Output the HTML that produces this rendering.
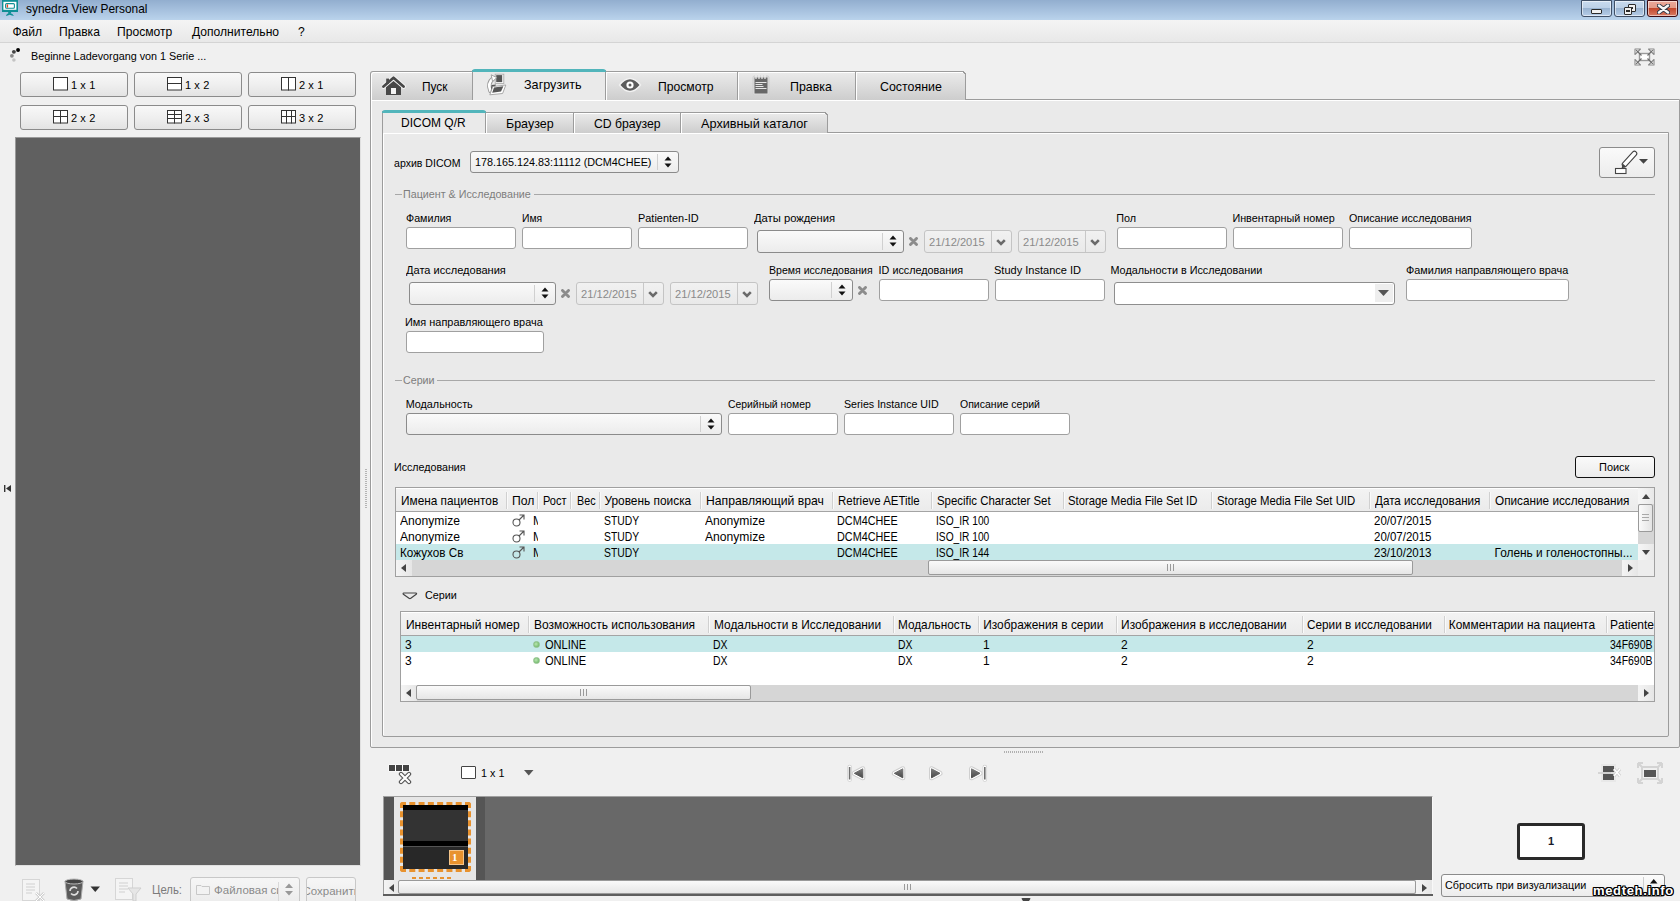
<!DOCTYPE html>
<html><head><meta charset="utf-8"><title>synedra View Personal</title><style>
*{box-sizing:border-box;margin:0;padding:0}
html,body{width:1680px;height:901px;overflow:hidden;background:#f0f0f0;font-family:"Liberation Sans",sans-serif;font-size:11px;color:#000}
.a{position:absolute}
.t{position:absolute;white-space:nowrap;line-height:13px}
.btn{position:absolute;border:1px solid #8b8b8b;border-radius:3px;background:linear-gradient(#f8f8f8 0%,#efefef 50%,#e3e3e3 100%)}
.inp{position:absolute;border:1px solid #a0a0a0;border-radius:3px;background:#fff}
.cmb{position:absolute;border:1px solid #8b8b8b;border-radius:3px;background:linear-gradient(#fafafa,#ececec)}
.dis{position:absolute;border:1px solid #c4c4c4;border-radius:3px;background:#ececec}
</style></head><body>
<div class="a" style="left:0px;top:0px;width:1680px;height:20px;background:linear-gradient(#92aecf,#bad3ec)"></div>
<svg class="a" style="left:0px;top:0px" width="20" height="17" viewBox="0 0 20 17"><rect x="2" y="0" width="16" height="12" fill="#0f8f95"/><rect x="3.4" y="1.8" width="13" height="8" fill="#fff"/><rect x="5.6" y="3.6" width="8.8" height="4.6" rx="1" fill="#fff" stroke="#0f8f95" stroke-width="1.1"/><rect x="6.7" y="4.2" width="1.4" height="3.5" rx="0.7" fill="#e0452a"/><rect x="8.2" y="11.5" width="2.9" height="2" fill="#0f8f95"/><path d="M6 16 Q6.5 13.3 9.7 13 Q12.9 13.3 14 16 Q12 15.8 9.7 14.8 Q7.5 15.8 6 16 Z" fill="#0f8f95"/></svg>
<div class="t" style="left:26px;top:2.78px;font-size:11.9px;color:#000transform:scaleX(0.9548);transform-origin:0 0;">synedra View Personal</div>
<div style="position:absolute;top:0;width:31px;height:17px;border:1px solid #3f4f66;border-radius:0 0 3px 3px;box-shadow:inset 0 0 0 1px rgba(255,255,255,0.55);left:1581px;background:linear-gradient(#c9dbef 0%,#bcd0e7 46%,#98b2d0 47%,#b6cde8 100%)"><div class="a" style="left:9px;top:8px;width:11px;height:5px;background:#f0f0f0;border:1px solid #2b2b2b;border-radius:1px"></div></div>
<div style="position:absolute;top:0;width:31px;height:17px;border:1px solid #3f4f66;border-radius:0 0 3px 3px;box-shadow:inset 0 0 0 1px rgba(255,255,255,0.55);left:1614px;background:linear-gradient(#c9dbef 0%,#bcd0e7 46%,#98b2d0 47%,#b6cde8 100%)"><div class="a" style="left:13px;top:3px;width:8px;height:8px;background:#f0f0f0;border:1px solid #2b2b2b;border-radius:1px"><div class="a" style="left:2px;top:2px;width:2px;height:2px;background:#2b2b2b"></div></div><div class="a" style="left:9px;top:6px;width:8px;height:8px;background:#f0f0f0;border:1px solid #2b2b2b;border-radius:1px"><div class="a" style="left:1px;top:2px;width:4px;height:2px;border:1px solid #2b2b2b"></div></div></div>
<div style="position:absolute;top:0;width:31px;height:17px;border:1px solid #3f4f66;border-radius:0 0 3px 3px;box-shadow:inset 0 0 0 1px rgba(255,255,255,0.55);left:1647px;border-color:#3a0a12;background:linear-gradient(#eca89a 0%,#e39a88 46%,#c3452b 47%,#d87b63 100%)"><svg class="a" style="left:9px;top:3px" width="13" height="10" viewBox="0 0 13 10"><path d="M2 1.5 L11 8.5 M11 1.5 L2 8.5" stroke="#2d3442" stroke-width="4.2" stroke-linecap="round"/><path d="M2 1.5 L11 8.5 M11 1.5 L2 8.5" stroke="#f6f6f6" stroke-width="2.4" stroke-linecap="round"/></svg></div>
<div class="a" style="left:0px;top:20px;width:1680px;height:23px;background:linear-gradient(#f4f4f4,#e8e8e8);border-bottom:1px solid #d4d4d4"></div>
<div class="t" style="left:12.4px;top:26.21px;font-size:12.1px;">Файл</div>
<div class="t" style="left:59px;top:26.21px;font-size:12.1px;">Правка</div>
<div class="t" style="left:117.1px;top:26.21px;font-size:12.1px;">Просмотр</div>
<div class="t" style="left:192px;top:26.21px;font-size:12.1px;">Дополнительно</div>
<div class="t" style="left:298px;top:26.21px;font-size:12.1px;">?</div>
<svg class="a" style="left:9px;top:47px" width="14" height="16" viewBox="0 0 14 16"><circle cx="9.05" cy="3" r="1.95" fill="#000"/><circle cx="4.9" cy="4.85" r="1.95" fill="#444"/><circle cx="2.9" cy="8.85" r="1.9" fill="#8a8a8a"/><circle cx="4.9" cy="13" r="1.8" fill="#c4c4c4"/></svg>
<div class="t" style="left:31px;top:50.16px;font-size:10.8px;">Beginne Ladevorgang von 1 Serie ...</div>
<svg class="a" style="left:1633px;top:47px" width="23" height="20" viewBox="0 0 23 20"><rect x="6.5" y="6.5" width="10" height="7" fill="#fff" stroke="#9a9a9a" stroke-width="1.4"/><path d="M2 2 L7.5 2 L2 7.5 Z" fill="#fff" stroke="#8a8a8a" stroke-width="1.1" stroke-linejoin="round"/><path d="M3.2 3.2 L8.5 8.5" stroke="#6a6a6a" stroke-width="1.2"/><path d="M21 2 L15.5 2 L21 7.5 Z" fill="#fff" stroke="#8a8a8a" stroke-width="1.1" stroke-linejoin="round"/><path d="M19.8 3.2 L14.5 8.5" stroke="#6a6a6a" stroke-width="1.2"/><path d="M2 18 L7.5 18 L2 12.5 Z" fill="#fff" stroke="#8a8a8a" stroke-width="1.1" stroke-linejoin="round"/><path d="M3.2 16.8 L8.5 11.5" stroke="#6a6a6a" stroke-width="1.2"/><path d="M21 18 L15.5 18 L21 12.5 Z" fill="#fff" stroke="#8a8a8a" stroke-width="1.1" stroke-linejoin="round"/><path d="M19.8 16.8 L14.5 11.5" stroke="#6a6a6a" stroke-width="1.2"/></svg>
<div class="btn" style="left:20px;top:72px;width:108px;height:25px;"></div>
<svg class="a" style="left:53px;top:77px" width="15" height="14" viewBox="0 0 15 14"><rect x="0.5" y="0.5" width="14" height="12.5" fill="#fff" stroke="#333"/></svg>
<div class="t" style="left:71px;top:79.09px;font-size:11px;letter-spacing:0.1px">1 x 1</div>
<div class="btn" style="left:134px;top:72px;width:108px;height:25px;"></div>
<svg class="a" style="left:167px;top:77px" width="15" height="14" viewBox="0 0 15 14"><rect x="0.5" y="0.5" width="14" height="12.5" fill="#fff" stroke="#333"/><path d="M0.5 6.5 H14.5" stroke="#333"/></svg>
<div class="t" style="left:185px;top:79.09px;font-size:11px;letter-spacing:0.1px">1 x 2</div>
<div class="btn" style="left:248px;top:72px;width:108px;height:25px;"></div>
<svg class="a" style="left:281px;top:77px" width="15" height="14" viewBox="0 0 15 14"><rect x="0.5" y="0.5" width="14" height="12.5" fill="#fff" stroke="#333"/><path d="M7.5 0.5 V13.5" stroke="#333"/></svg>
<div class="t" style="left:299px;top:79.09px;font-size:11px;letter-spacing:0.1px">2 x 1</div>
<div class="btn" style="left:20px;top:105px;width:108px;height:25px;"></div>
<svg class="a" style="left:53px;top:110px" width="15" height="14" viewBox="0 0 15 14"><rect x="0.5" y="0.5" width="14" height="12.5" fill="#fff" stroke="#333"/><path d="M0.5 6.5 H14.5 M7.5 0.5 V13.5" stroke="#333"/></svg>
<div class="t" style="left:71px;top:112.09px;font-size:11px;letter-spacing:0.1px">2 x 2</div>
<div class="btn" style="left:134px;top:105px;width:108px;height:25px;"></div>
<svg class="a" style="left:167px;top:110px" width="15" height="14" viewBox="0 0 15 14"><rect x="0.5" y="0.5" width="14" height="12.5" fill="#fff" stroke="#333"/><path d="M0.5 4.5 H14.5 M0.5 8.5 H14.5 M7.5 0.5 V13.5" stroke="#333"/></svg>
<div class="t" style="left:185px;top:112.09px;font-size:11px;letter-spacing:0.1px">2 x 3</div>
<div class="btn" style="left:248px;top:105px;width:108px;height:25px;"></div>
<svg class="a" style="left:281px;top:110px" width="15" height="14" viewBox="0 0 15 14"><rect x="0.5" y="0.5" width="14" height="12.5" fill="#fff" stroke="#333"/><path d="M0.5 6.5 H14.5 M5.5 0.5 V13.5 M10.5 0.5 V13.5" stroke="#333"/></svg>
<div class="t" style="left:299px;top:112.09px;font-size:11px;letter-spacing:0.1px">3 x 2</div>
<div class="a" style="left:15px;top:137px;width:346px;height:729px;background:#606060;border:1px solid #9a9a9a;border-bottom-color:#e0e0e0;border-right-color:#e0e0e0"></div>
<svg class="a" style="left:3px;top:484px" width="9" height="9" viewBox="0 0 9 9"><rect x="1" y="1" width="1.4" height="7" fill="#333"/><path d="M8 1 L3 4.5 L8 8 Z" fill="#333"/></svg>
<svg class="a" style="left:22px;top:879px" width="24" height="22" viewBox="0 0 24 22"><rect x="0.5" y="0.5" width="17" height="21" fill="#f4f4f4" stroke="#d6d6d6"/><path d="M4 5h9M4 8h9M4 11h9M4 14h6" stroke="#dcdcdc" stroke-width="1.5"/><path d="M14 14 L22 22 M22 14 L14 22" stroke="#d0d0d0" stroke-width="2.5"/><path d="M14 14 L22 22 M22 14 L14 22" stroke="#fff" stroke-width="1"/></svg>
<svg class="a" style="left:64px;top:878px" width="20" height="23" viewBox="0 0 20 23"><path d="M1 3 L3 21 Q10 24 17 21 L19 3 Z" fill="#5a5a5a" stroke="#aaa"/><ellipse cx="10" cy="3.5" rx="9" ry="2.5" fill="#444" stroke="#bbb"/><path d="M6 13 a4 4 0 0 1 7 -2.5 M14 13 a4 4 0 0 1 -7 2.5" stroke="#ddd" stroke-width="1.6" fill="none"/></svg>
<svg class="a" style="left:90px;top:886px" width="11" height="7" viewBox="0 0 11 7"><path d="M0.5 0.5 H10 L5.25 6 Z" fill="#333"/></svg>
<svg class="a" style="left:115px;top:878px" width="27" height="23" viewBox="0 0 27 23"><rect x="0.5" y="0.5" width="17" height="21" fill="#f4f4f4" stroke="#d6d6d6"/><path d="M4 5h9M4 8h9M4 11h9M4 14h6" stroke="#dcdcdc" stroke-width="1.5"/><path d="M13 10 H26 L21 16 V23 H18 V16 Z" fill="#e6e6e6" stroke="#cfcfcf"/></svg>
<div class="t" style="left:152px;top:883.78px;font-size:11.9px;color:#7b7b7b;transform:scaleX(0.9531);transform-origin:0 0;">Цель:</div>
<div class="dis" style="left:190px;top:877px;width:110px;height:27px;background:linear-gradient(#f6f6f6,#ececec);border-color:#c8c8c8"></div>
<svg class="a" style="left:196px;top:884px" width="14" height="11" viewBox="0 0 14 11"><path d="M0.5 1.5 H5 L6 2.5 H13.5 V10.5 H0.5 Z" fill="#f2f2f2" stroke="#c8c8c8"/></svg>
<div class="a" style="left:213px;top:880px;width:65px;height:18px;overflow:hidden"><div class="t" style="left:1px;top:4.4px;font-size:11.5px;color:#8a8a8a">Файловая система</div></div>
<div class="a" style="left:278px;top:882px;width:1px;height:19px;background:#d8d8d8"></div>
<svg class="a" style="left:285px;top:883px" width="8" height="13" viewBox="0 0 8 13"><path d="M0 5 L4 0.5 L8 5 Z M0 8 L4 12.5 L8 8 Z" fill="#999"/></svg>
<div class="dis" style="left:306px;top:877px;width:50px;height:27px;background:linear-gradient(#f6f6f6,#ececec);border-color:#c8c8c8;overflow:hidden"><div class="t" style="left:-4.5px;top:7px;font-size:11.5px;color:#8a8a8a">Сохранить</div></div>
<div class="a" style="left:370px;top:99px;width:1310px;height:649px;background:#eaeaea;border:1px solid #9c9c9c;box-shadow:inset 1px 1px 0 #fff;border-radius:0 0 2px 2px"></div>
<div class="a" style="left:370px;top:71px;width:103px;height:29px;background:linear-gradient(#ebebeb,#cdcdcd);border:1px solid #9c9c9c;border-bottom:none;box-shadow:inset 1px 1px 0 #fff;border-radius:3px 0 0 0;"></div>
<div class="a" style="left:605px;top:71px;width:133px;height:29px;background:linear-gradient(#ebebeb,#cdcdcd);border:1px solid #9c9c9c;border-bottom:none;box-shadow:inset 1px 1px 0 #fff;"></div>
<div class="a" style="left:737px;top:71px;width:119px;height:29px;background:linear-gradient(#ebebeb,#cdcdcd);border:1px solid #9c9c9c;border-bottom:none;box-shadow:inset 1px 1px 0 #fff;"></div>
<div class="a" style="left:855px;top:71px;width:111px;height:29px;background:linear-gradient(#ebebeb,#cdcdcd);border:1px solid #9c9c9c;border-bottom:none;box-shadow:inset 1px 1px 0 #fff;"></div>
<div class="a" style="left:962px;top:71px;width:4px;height:4px;background:linear-gradient(45deg,transparent 45%,#9c9c9c 45% 65%,#f0f0f0 65%)"></div>
<div class="a" style="left:472px;top:70px;width:134px;height:30px;background:#eaeaea;border:1px solid #9c9c9c;border-top:none;border-bottom:none;"></div>
<div class="a" style="left:472px;top:69px;width:134px;height:3px;background:#52b5bb;border-radius:3px 3px 0 0"></div>
<svg class="a" style="left:382px;top:76px" width="24" height="20" viewBox="0 0 24 20"><g stroke="#fff" stroke-width="1" opacity="0.7"><path d="M1.5 10.5 L11.5 1.8 L21.5 10.5" fill="none" stroke-width="4.6" stroke-linecap="round" stroke-linejoin="round"/></g><path d="M1.5 10.5 L11.5 1.8 L21.5 10.5" fill="none" stroke="#484848" stroke-width="2.8" stroke-linecap="round" stroke-linejoin="round"/><rect x="4.2" y="2.6" width="2.8" height="5" fill="#484848"/><path d="M4 11.3 L11.5 5 L19 11.3 V19 H4 Z" fill="#484848"/><rect x="9" y="12" width="5" height="6" fill="#f4f4f4"/></svg>
<svg class="a" style="left:482px;top:70px" width="28" height="28" viewBox="0 0 28 28"><rect x="13.2" y="4.2" width="8.6" height="9.2" fill="#fff" stroke="#aaa" stroke-width="0.9"/><rect x="14.2" y="5.1" width="6" height="7" fill="#555"/><path d="M8.5 21 Q5 13.5 11.2 8.3" fill="none" stroke="#9a9a9a" stroke-width="4.4" stroke-linecap="round"/><path d="M8.5 21 Q5 13.5 11.2 8.3" fill="none" stroke="#fff" stroke-width="2.6" stroke-linecap="round"/><path d="M9.2 4.8 L14.8 7.6 L10.6 11.6 Z" fill="#fff" stroke="#9a9a9a" stroke-width="0.9" stroke-linejoin="round"/><path d="M9.5 15 L14 14.5 L11 22 L8.6 22.5 Z" fill="#555"/><path d="M10.8 16.6 L23.8 15 L20.6 23.5 L7.8 24.8 Z" fill="#fff" stroke="#a0a0a0" stroke-width="0.9" stroke-linejoin="round"/><path d="M12 17.6 L21.4 16.2 L19 21.6 L10.2 22.7 Z" fill="#555"/></svg>
<svg class="a" style="left:618px;top:76px" width="24" height="18" viewBox="0 0 24 18"><path d="M1.5 9 Q12 -4 22.5 9 Q12 22 1.5 9 Z" fill="#5c5c5c" stroke="#f2f2f2" stroke-width="1.4"/><circle cx="12" cy="9" r="3.6" fill="#fff"/><circle cx="12" cy="9" r="1.5" fill="#5c5c5c"/></svg>
<svg class="a" style="left:752px;top:74px" width="18" height="22" viewBox="0 0 18 22"><rect x="1" y="2" width="16" height="19" rx="1.5" fill="#dedede" stroke="#cfcfcf"/><rect x="2.5" y="3.5" width="13" height="16" fill="#676767"/><path d="M4 1v4M7 1v4M10 1v4M13 1v4" stroke="#f0f0f0" stroke-width="1.2"/><path d="M3.5 8.5h11M3.5 10.5h7M3.5 12.5h8M3.5 14.5h11" stroke="#e6e6e6" stroke-width="1"/></svg>
<div class="t" style="left:422px;top:80.78px;font-size:11.9px;">Пуск</div>
<div class="t" style="left:524px;top:78.6px;font-size:12.4px;transform:scaleX(1.0174);transform-origin:0 0;">Загрузить</div>
<div class="t" style="left:658px;top:80.6px;font-size:12.4px;transform:scaleX(0.9818);transform-origin:0 0;">Просмотр</div>
<div class="t" style="left:790px;top:80.6px;font-size:12.4px;">Правка</div>
<div class="t" style="left:880px;top:80.6px;font-size:12.4px;">Состояние</div>
<div class="a" style="left:382px;top:132px;width:1287px;height:605px;background:#eaeaea;border:1px solid #9c9c9c;box-shadow:inset 1px 1px 0 #fff;border-radius:0 0 2px 2px"></div>
<div class="a" style="left:485px;top:112px;width:89px;height:21px;background:linear-gradient(#ebebeb,#cdcdcd);border:1px solid #9c9c9c;border-bottom:none;box-shadow:inset 1px 1px 0 #fff;"></div>
<div class="a" style="left:573px;top:112px;width:108px;height:21px;background:linear-gradient(#ebebeb,#cdcdcd);border:1px solid #9c9c9c;border-bottom:none;box-shadow:inset 1px 1px 0 #fff;"></div>
<div class="a" style="left:680px;top:112px;width:148px;height:21px;background:linear-gradient(#ebebeb,#cdcdcd);border:1px solid #9c9c9c;border-bottom:none;box-shadow:inset 1px 1px 0 #fff;"></div>
<div class="a" style="left:824px;top:112px;width:4px;height:4px;background:linear-gradient(45deg,transparent 45%,#9c9c9c 45% 65%,#eaeaea 65%)"></div>
<div class="a" style="left:382px;top:111px;width:104px;height:22px;background:#eaeaea;border:1px solid #9c9c9c;border-top:none;border-bottom:none;"></div>
<div class="a" style="left:382px;top:110px;width:104px;height:3px;background:#52b5bb;border-radius:3px 3px 0 0"></div>
<div class="t" style="left:401px;top:116.78px;font-size:11.9px;transform:scaleX(1.0090);transform-origin:0 0;">DICOM Q/R</div>
<div class="t" style="left:506px;top:117.6px;font-size:12.4px;transform:scaleX(1.0057);transform-origin:0 0;">Браузер</div>
<div class="t" style="left:594px;top:117.6px;font-size:12.4px;transform:scaleX(0.9860);transform-origin:0 0;">CD браузер</div>
<div class="t" style="left:701px;top:117.6px;font-size:12.4px;transform:scaleX(1.0247);transform-origin:0 0;">Архивный каталог</div>
<div class="t" style="left:394px;top:157.16px;font-size:10.8px;transform:scaleX(0.9786);transform-origin:0 0;">архив DICOM</div>
<div class="cmb" style="left:470px;top:151px;width:209px;height:22px;"></div>
<div class="a" style="left:657px;top:154px;width:1px;height:16px;background:#d0d0d0"></div>
<svg class="a" style="left:664px;top:156px" width="8" height="12" viewBox="0 0 8 12"><path d="M0.5 4.5 L4 0.5 L7.5 4.5 Z M0.5 7.5 L4 11.5 L7.5 7.5 Z" fill="#111"/></svg>
<div class="t" style="left:475px;top:156.16px;font-size:10.8px;">178.165.124.83:11112 (DCM4CHEE)</div>
<div class="btn" style="left:1599px;top:147px;width:56px;height:31px;background:linear-gradient(#fafafa,#ececec)"></div>
<svg class="a" style="left:1599px;top:147px" width="56" height="31" viewBox="0 0 56 31"><rect x="16.5" y="21.5" width="10.5" height="5" fill="#fff" stroke="#444" stroke-width="1.1"/><path d="M25.5 17.5 L35.5 6.5" stroke="#444" stroke-width="5.6" stroke-linecap="round"/><path d="M25.5 17.5 L35.5 6.5" stroke="#fff" stroke-width="3.4" stroke-linecap="round"/><path d="M22.6 21.4 L23.6 16.6 L27.4 19.8 Z" fill="#444"/><path d="M40 12 H49 L44.5 16.8 Z" fill="#444"/></svg>
<div class="a" style="left:395px;top:194px;width:1260px;height:1px;background:#a8a8a8"></div>
<div class="a" style="left:402px;top:186px;width:132px;height:14px;background:#eaeaea"></div>
<div class="t" style="left:403px;top:188.16px;font-size:10.8px;color:#7d7d7d;transform:scaleX(0.9932);transform-origin:0 0;">Пациент &amp; Исследование</div>
<div class="t" style="left:405.5px;top:212.16px;font-size:10.8px;transform:scaleX(0.9900);transform-origin:0 0;">Фамилия</div>
<div class="t" style="left:521.6px;top:212.16px;font-size:10.8px;transform:scaleX(0.9603);transform-origin:0 0;">Имя</div>
<div class="t" style="left:637.5px;top:212.16px;font-size:10.8px;transform:scaleX(1.0111);transform-origin:0 0;">Patienten-ID</div>
<div class="t" style="left:754px;top:212.16px;font-size:10.8px;transform:scaleX(1.0402);transform-origin:0 0;">Даты рождения</div>
<div class="t" style="left:1116.3px;top:212.16px;font-size:10.8px;">Пол</div>
<div class="t" style="left:1232.4px;top:212.16px;font-size:10.8px;">Инвентарный номер</div>
<div class="t" style="left:1349px;top:212.16px;font-size:10.8px;transform:scaleX(0.9946);transform-origin:0 0;">Описание исследования</div>
<div class="inp" style="left:406px;top:227px;width:110px;height:22px;"></div>
<div class="inp" style="left:522px;top:227px;width:110px;height:22px;"></div>
<div class="inp" style="left:638px;top:227px;width:110px;height:22px;"></div>
<div class="cmb" style="left:757px;top:230px;width:147px;height:23px;"></div>
<div class="a" style="left:882px;top:233px;width:1px;height:17px;background:#d0d0d0"></div>
<svg class="a" style="left:889px;top:235px" width="8" height="12" viewBox="0 0 8 12"><path d="M0.5 4.5 L4 0.5 L7.5 4.5 Z M0.5 7.5 L4 11.5 L7.5 7.5 Z" fill="#111"/></svg>
<svg class="a" style="left:909px;top:237px" width="9" height="9" viewBox="0 0 9 9"><path d="M1.5 1.5 L7.5 7.5 M7.5 1.5 L1.5 7.5" stroke="#8c8c8c" stroke-width="2.9" stroke-linecap="round"/></svg>
<div class="dis" style="left:924px;top:230px;width:88px;height:23px;background:linear-gradient(#f1f1f1,#e9e9e9)"></div>
<div class="a" style="left:991px;top:231px;width:1px;height:21px;background:#c8c8c8"></div>
<div class="t" style="left:929px;top:236.16px;font-size:10.8px;color:#8a8a8a;transform:scaleX(1.0305);transform-origin:0 0;">21/12/2015</div>
<svg class="a" style="left:996px;top:239px" width="10" height="7" viewBox="0 0 10 7"><path d="M1.2 1.2 L5 5 L8.8 1.2" stroke="#6a6a6a" stroke-width="2.6" fill="none"/></svg>
<div class="dis" style="left:1018px;top:230px;width:88px;height:23px;background:linear-gradient(#f1f1f1,#e9e9e9)"></div>
<div class="a" style="left:1085px;top:231px;width:1px;height:21px;background:#c8c8c8"></div>
<div class="t" style="left:1023px;top:236.16px;font-size:10.8px;color:#8a8a8a;transform:scaleX(1.0305);transform-origin:0 0;">21/12/2015</div>
<svg class="a" style="left:1090px;top:239px" width="10" height="7" viewBox="0 0 10 7"><path d="M1.2 1.2 L5 5 L8.8 1.2" stroke="#6a6a6a" stroke-width="2.6" fill="none"/></svg>
<div class="inp" style="left:1117px;top:227px;width:110px;height:22px;"></div>
<div class="inp" style="left:1233px;top:227px;width:110px;height:22px;"></div>
<div class="inp" style="left:1349px;top:227px;width:123px;height:22px;"></div>
<div class="t" style="left:405.5px;top:264.16px;font-size:10.8px;transform:scaleX(1.0226);transform-origin:0 0;">Дата исследования</div>
<div class="t" style="left:768.5px;top:264.16px;font-size:10.8px;transform:scaleX(0.9767);transform-origin:0 0;">Время исследования</div>
<div class="t" style="left:878.6px;top:264.16px;font-size:10.8px;">ID исследования</div>
<div class="t" style="left:994.4px;top:264.16px;font-size:10.8px;transform:scaleX(1.0206);transform-origin:0 0;">Study Instance ID</div>
<div class="t" style="left:1110.5px;top:264.16px;font-size:10.8px;">Модальности в Исследовании</div>
<div class="t" style="left:1406px;top:264.16px;font-size:10.8px;transform:scaleX(1.0083);transform-origin:0 0;">Фамилия направляющего врача</div>
<div class="cmb" style="left:409px;top:282px;width:147px;height:23px;"></div>
<div class="a" style="left:534px;top:285px;width:1px;height:17px;background:#d0d0d0"></div>
<svg class="a" style="left:541px;top:287px" width="8" height="12" viewBox="0 0 8 12"><path d="M0.5 4.5 L4 0.5 L7.5 4.5 Z M0.5 7.5 L4 11.5 L7.5 7.5 Z" fill="#111"/></svg>
<svg class="a" style="left:561px;top:289px" width="9" height="9" viewBox="0 0 9 9"><path d="M1.5 1.5 L7.5 7.5 M7.5 1.5 L1.5 7.5" stroke="#8c8c8c" stroke-width="2.9" stroke-linecap="round"/></svg>
<div class="dis" style="left:576px;top:282px;width:88px;height:23px;background:linear-gradient(#f1f1f1,#e9e9e9)"></div>
<div class="a" style="left:643px;top:283px;width:1px;height:21px;background:#c8c8c8"></div>
<div class="t" style="left:581px;top:288.16px;font-size:10.8px;color:#8a8a8a;transform:scaleX(1.0305);transform-origin:0 0;">21/12/2015</div>
<svg class="a" style="left:648px;top:291px" width="10" height="7" viewBox="0 0 10 7"><path d="M1.2 1.2 L5 5 L8.8 1.2" stroke="#6a6a6a" stroke-width="2.6" fill="none"/></svg>
<div class="dis" style="left:670px;top:282px;width:88px;height:23px;background:linear-gradient(#f1f1f1,#e9e9e9)"></div>
<div class="a" style="left:737px;top:283px;width:1px;height:21px;background:#c8c8c8"></div>
<div class="t" style="left:675px;top:288.16px;font-size:10.8px;color:#8a8a8a;transform:scaleX(1.0305);transform-origin:0 0;">21/12/2015</div>
<svg class="a" style="left:742px;top:291px" width="10" height="7" viewBox="0 0 10 7"><path d="M1.2 1.2 L5 5 L8.8 1.2" stroke="#6a6a6a" stroke-width="2.6" fill="none"/></svg>
<div class="cmb" style="left:769px;top:279px;width:84px;height:22px;"></div>
<div class="a" style="left:831px;top:282px;width:1px;height:16px;background:#d0d0d0"></div>
<svg class="a" style="left:838px;top:284px" width="8" height="12" viewBox="0 0 8 12"><path d="M0.5 4.5 L4 0.5 L7.5 4.5 Z M0.5 7.5 L4 11.5 L7.5 7.5 Z" fill="#111"/></svg>
<svg class="a" style="left:858px;top:286px" width="9" height="9" viewBox="0 0 9 9"><path d="M1.5 1.5 L7.5 7.5 M7.5 1.5 L1.5 7.5" stroke="#8c8c8c" stroke-width="2.9" stroke-linecap="round"/></svg>
<div class="inp" style="left:879px;top:279px;width:110px;height:22px;"></div>
<div class="inp" style="left:995px;top:279px;width:110px;height:22px;"></div>
<div class="inp" style="left:1114px;top:282px;width:281px;height:23px;border-color:#8e8e8e"></div>
<div class="a" style="left:1375px;top:284px;width:18px;height:18px;background:#eeeeee"></div>
<svg class="a" style="left:1377px;top:289px" width="13" height="8" viewBox="0 0 13 8"><path d="M1 1 H12 L6.5 7 Z" fill="#555"/></svg>
<div class="inp" style="left:1406px;top:279px;width:163px;height:22px;"></div>
<div class="t" style="left:405px;top:316.16px;font-size:10.8px;transform:scaleX(1.0115);transform-origin:0 0;">Имя направляющего врача</div>
<div class="inp" style="left:406px;top:331px;width:138px;height:22px;"></div>
<div class="a" style="left:395px;top:380px;width:1260px;height:1px;background:#a8a8a8"></div>
<div class="a" style="left:402px;top:372px;width:35px;height:14px;background:#eaeaea"></div>
<div class="t" style="left:403px;top:374.19px;font-size:10.7px;color:#7d7d7d;">Серии</div>
<div class="t" style="left:405.7px;top:398.16px;font-size:10.8px;">Модальность</div>
<div class="t" style="left:728px;top:398.16px;font-size:10.8px;transform:scaleX(0.9623);transform-origin:0 0;">Серийный номер</div>
<div class="t" style="left:843.8px;top:398.16px;font-size:10.8px;transform:scaleX(0.9860);transform-origin:0 0;">Series Instance UID</div>
<div class="t" style="left:960px;top:398.16px;font-size:10.8px;transform:scaleX(0.9736);transform-origin:0 0;">Описание серий</div>
<div class="cmb" style="left:406px;top:413px;width:316px;height:22px;"></div>
<div class="a" style="left:700px;top:416px;width:1px;height:16px;background:#d0d0d0"></div>
<svg class="a" style="left:707px;top:418px" width="8" height="12" viewBox="0 0 8 12"><path d="M0.5 4.5 L4 0.5 L7.5 4.5 Z M0.5 7.5 L4 11.5 L7.5 7.5 Z" fill="#111"/></svg>
<div class="inp" style="left:728px;top:413px;width:110px;height:22px;"></div>
<div class="inp" style="left:844px;top:413px;width:110px;height:22px;"></div>
<div class="inp" style="left:960px;top:413px;width:110px;height:22px;"></div>
<div class="t" style="left:394px;top:461.16px;font-size:10.8px;transform:scaleX(0.9888);transform-origin:0 0;">Исследования</div>
<div class="btn" style="left:1575px;top:456px;width:80px;height:22px;background:linear-gradient(#fafafa,#ececec);border-color:#111"></div>
<div class="t" style="left:1599px;top:461.16px;font-size:10.8px;transform:scaleX(1.0158);transform-origin:0 0;">Поиск</div>
<div class="a" style="left:395px;top:487px;width:1260px;height:90px;background:#fff;border:1px solid #a0a0a0;box-shadow:inset 1px 1px 0 #fff"></div>
<div class="a" style="left:396px;top:488px;width:1242px;height:24px;background:linear-gradient(#f3f3f3,#ebebeb);border-bottom:1px solid #a4a4a4;box-shadow:inset 0 1px 0 #fff"></div>
<div class="a" style="left:506px;top:492px;width:1px;height:17px;background:#d0d0d0;box-shadow:1px 0 0 #fafafa"></div>
<div class="a" style="left:537px;top:492px;width:1px;height:17px;background:#d0d0d0;box-shadow:1px 0 0 #fafafa"></div>
<div class="a" style="left:570px;top:492px;width:1px;height:17px;background:#d0d0d0;box-shadow:1px 0 0 #fafafa"></div>
<div class="a" style="left:599px;top:492px;width:1px;height:17px;background:#d0d0d0;box-shadow:1px 0 0 #fafafa"></div>
<div class="a" style="left:700px;top:492px;width:1px;height:17px;background:#d0d0d0;box-shadow:1px 0 0 #fafafa"></div>
<div class="a" style="left:832px;top:492px;width:1px;height:17px;background:#d0d0d0;box-shadow:1px 0 0 #fafafa"></div>
<div class="a" style="left:931px;top:492px;width:1px;height:17px;background:#d0d0d0;box-shadow:1px 0 0 #fafafa"></div>
<div class="a" style="left:1063px;top:492px;width:1px;height:17px;background:#d0d0d0;box-shadow:1px 0 0 #fafafa"></div>
<div class="a" style="left:1211px;top:492px;width:1px;height:17px;background:#d0d0d0;box-shadow:1px 0 0 #fafafa"></div>
<div class="a" style="left:1369px;top:492px;width:1px;height:17px;background:#d0d0d0;box-shadow:1px 0 0 #fafafa"></div>
<div class="a" style="left:1489px;top:492px;width:1px;height:17px;background:#d0d0d0;box-shadow:1px 0 0 #fafafa"></div>
<div class="t" style="left:401.1px;top:494.78px;font-size:11.9px;transform:scaleX(0.9947);transform-origin:0 0;">Имена пациентов</div>
<div class="t" style="left:512.3px;top:494.78px;font-size:11.9px;transform:scaleX(1.0250);transform-origin:0 0;">Пол</div>
<div class="t" style="left:543.3px;top:494.78px;font-size:11.9px;transform:scaleX(0.9279);transform-origin:0 0;">Рост</div>
<div class="t" style="left:576.5px;top:494.78px;font-size:11.9px;transform:scaleX(0.9071);transform-origin:0 0;">Вес</div>
<div class="t" style="left:604.4px;top:494.78px;font-size:11.9px;">Уровень поиска</div>
<div class="t" style="left:706.1px;top:494.78px;font-size:11.9px;transform:scaleX(1.0248);transform-origin:0 0;">Направляющий врач</div>
<div class="t" style="left:838.3px;top:494.78px;font-size:11.9px;transform:scaleX(0.9626);transform-origin:0 0;">Retrieve AETitle</div>
<div class="t" style="left:937.2px;top:494.78px;font-size:11.9px;transform:scaleX(0.9604);transform-origin:0 0;">Specific Character Set</div>
<div class="t" style="left:1067.8px;top:494.78px;font-size:11.9px;transform:scaleX(0.9504);transform-origin:0 0;">Storage Media File Set ID</div>
<div class="t" style="left:1217.1px;top:494.78px;font-size:11.9px;transform:scaleX(0.9548);transform-origin:0 0;">Storage Media File Set UID</div>
<div class="t" style="left:1374.5px;top:494.78px;font-size:11.9px;transform:scaleX(0.9811);transform-origin:0 0;">Дата исследования</div>
<div class="t" style="left:1495.2px;top:494.78px;font-size:11.9px;transform:scaleX(0.9894);transform-origin:0 0;">Описание исследования</div>
<div class="a" style="left:396px;top:544px;width:1242px;height:16px;background:#c5e8e9"></div>
<div class="t" style="left:400px;top:514.78px;font-size:11.9px;transform:scaleX(1.0192);transform-origin:0 0;">Anonymize</div>
<svg class="a" style="left:512px;top:514px" width="13" height="13" viewBox="0 0 13 13"><circle cx="4.5" cy="8.5" r="3.5" fill="none" stroke="#555" stroke-width="1.1"/><path d="M7 6 L11.5 1.5 M7.5 1 H12 V5.5" fill="none" stroke="#555" stroke-width="1.1"/></svg>
<div class="a" style="left:533px;top:515px;width:5px;height:14px;overflow:hidden"><div class="t" style="left:0;top:0;font-size:12px">M</div></div>
<div class="t" style="left:604.4px;top:514.78px;font-size:11.9px;transform:scaleX(0.8703);transform-origin:0 0;">STUDY</div>
<div class="t" style="left:705.3px;top:514.78px;font-size:11.9px;transform:scaleX(1.0192);transform-origin:0 0;">Anonymize</div>
<div class="t" style="left:837px;top:514.78px;font-size:11.9px;transform:scaleX(0.9104);transform-origin:0 0;">DCM4CHEE</div>
<div class="t" style="left:936px;top:514.78px;font-size:11.9px;transform:scaleX(0.8572);transform-origin:0 0;">ISO_IR 100</div>
<div class="t" style="left:1374.1px;top:514.78px;font-size:11.9px;transform:scaleX(0.9654);transform-origin:0 0;">20/07/2015</div>
<div class="t" style="left:400px;top:530.78px;font-size:11.9px;transform:scaleX(1.0192);transform-origin:0 0;">Anonymize</div>
<svg class="a" style="left:512px;top:530px" width="13" height="13" viewBox="0 0 13 13"><circle cx="4.5" cy="8.5" r="3.5" fill="none" stroke="#555" stroke-width="1.1"/><path d="M7 6 L11.5 1.5 M7.5 1 H12 V5.5" fill="none" stroke="#555" stroke-width="1.1"/></svg>
<div class="a" style="left:533px;top:531px;width:5px;height:14px;overflow:hidden"><div class="t" style="left:0;top:0;font-size:12px">M</div></div>
<div class="t" style="left:604.4px;top:530.78px;font-size:11.9px;transform:scaleX(0.8703);transform-origin:0 0;">STUDY</div>
<div class="t" style="left:705.3px;top:530.78px;font-size:11.9px;transform:scaleX(1.0192);transform-origin:0 0;">Anonymize</div>
<div class="t" style="left:837px;top:530.78px;font-size:11.9px;transform:scaleX(0.9104);transform-origin:0 0;">DCM4CHEE</div>
<div class="t" style="left:936px;top:530.78px;font-size:11.9px;transform:scaleX(0.8572);transform-origin:0 0;">ISO_IR 100</div>
<div class="t" style="left:1374.1px;top:530.78px;font-size:11.9px;transform:scaleX(0.9654);transform-origin:0 0;">20/07/2015</div>
<div class="t" style="left:400px;top:546.78px;font-size:11.9px;transform:scaleX(0.9854);transform-origin:0 0;">Кожухов Св</div>
<svg class="a" style="left:512px;top:546px" width="13" height="13" viewBox="0 0 13 13"><circle cx="4.5" cy="8.5" r="3.5" fill="none" stroke="#555" stroke-width="1.1"/><path d="M7 6 L11.5 1.5 M7.5 1 H12 V5.5" fill="none" stroke="#555" stroke-width="1.1"/></svg>
<div class="a" style="left:533px;top:547px;width:5px;height:14px;overflow:hidden"><div class="t" style="left:0;top:0;font-size:12px">M</div></div>
<div class="t" style="left:604.4px;top:546.78px;font-size:11.9px;transform:scaleX(0.8703);transform-origin:0 0;">STUDY</div>
<div class="t" style="left:837px;top:546.78px;font-size:11.9px;transform:scaleX(0.9104);transform-origin:0 0;">DCM4CHEE</div>
<div class="t" style="left:936px;top:546.78px;font-size:11.9px;transform:scaleX(0.8572);transform-origin:0 0;">ISO_IR 144</div>
<div class="t" style="left:1374.1px;top:546.78px;font-size:11.9px;transform:scaleX(0.9654);transform-origin:0 0;">23/10/2013</div>
<div class="t" style="left:1494.5px;top:546.78px;font-size:11.9px;">Голень и голеностопны...</div>
<div class="a" style="left:1638px;top:488px;width:16px;height:72px;background:#d6d6d6"></div>
<div class="a" style="left:1638px;top:488px;width:16px;height:16px;background:linear-gradient(90deg,#f6f6f6,#e8e8e8)"></div>
<div class="a" style="left:1638px;top:544px;width:16px;height:16px;background:linear-gradient(90deg,#f6f6f6,#e8e8e8)"></div>
<svg class="a" style="left:1642px;top:494px" width="8" height="5" viewBox="0 0 8 5"><path d="M0 5 H8 L4 0 Z" fill="#444"/></svg>
<svg class="a" style="left:1642px;top:550px" width="8" height="5" viewBox="0 0 8 5"><path d="M0 0 H8 L4 5 Z" fill="#444"/></svg>
<div class="a" style="left:1638px;top:504px;width:15px;height:28px;background:linear-gradient(90deg,#fafafa,#e4e4e4);border:1px solid #9a9a9a;border-radius:2px"></div>
<div class="a" style="left:1642px;top:514px;width:7px;height:8px;background:repeating-linear-gradient(#a8a8a8 0 1px,transparent 1px 3px)"></div>
<div class="a" style="left:396px;top:560px;width:1242px;height:16px;background:#d6d6d6"></div>
<div class="a" style="left:396px;top:560px;width:16px;height:16px;background:linear-gradient(90deg,#f4f4f4,#e6e6e6)"></div>
<div class="a" style="left:1622px;top:560px;width:16px;height:16px;background:linear-gradient(90deg,#f4f4f4,#e6e6e6)"></div>
<svg class="a" style="left:401px;top:564px" width="5" height="8" viewBox="0 0 5 8"><path d="M5 0 V8 L0 4 Z" fill="#444"/></svg>
<svg class="a" style="left:1628px;top:564px" width="5" height="8" viewBox="0 0 5 8"><path d="M0 0 V8 L5 4 Z" fill="#444"/></svg>
<div class="a" style="left:928px;top:560px;width:485px;height:15px;background:linear-gradient(#fafafa,#e6e6e6);border:1px solid #9a9a9a;border-radius:2px"></div>
<div class="a" style="left:1167px;top:564px;width:7px;height:7px;background:repeating-linear-gradient(90deg,#9a9a9a 0 1px,transparent 1px 3px)"></div>
<div class="a" style="left:1638px;top:560px;width:16px;height:16px;background:#ededed"></div>
<svg class="a" style="left:402px;top:592px" width="16" height="8" viewBox="0 0 16 8"><path d="M1.8 1 H13.8 Q15.2 1.2 14.2 2.3 L8.8 6.3 Q7.9 7 7 6.3 L1.4 2.3 Q0.6 1.2 1.8 1 Z" fill="none" stroke="#444" stroke-width="1.15"/></svg>
<div class="t" style="left:425px;top:589.16px;font-size:10.8px;">Серии</div>
<div class="a" style="left:400px;top:611px;width:1255px;height:91px;background:#fff;border:1px solid #a0a0a0;box-shadow:inset 1px 1px 0 #fff"></div>
<div class="a" style="left:401px;top:612px;width:1253px;height:24px;background:linear-gradient(#f3f3f3,#ebebeb);border-bottom:1px solid #a4a4a4;box-shadow:inset 0 1px 0 #fff"></div>
<div class="a" style="left:528px;top:616px;width:1px;height:17px;background:#d0d0d0;box-shadow:1px 0 0 #fafafa"></div>
<div class="a" style="left:708px;top:616px;width:1px;height:17px;background:#d0d0d0;box-shadow:1px 0 0 #fafafa"></div>
<div class="a" style="left:893px;top:616px;width:1px;height:17px;background:#d0d0d0;box-shadow:1px 0 0 #fafafa"></div>
<div class="a" style="left:978px;top:616px;width:1px;height:17px;background:#d0d0d0;box-shadow:1px 0 0 #fafafa"></div>
<div class="a" style="left:1116px;top:616px;width:1px;height:17px;background:#d0d0d0;box-shadow:1px 0 0 #fafafa"></div>
<div class="a" style="left:1302px;top:616px;width:1px;height:17px;background:#d0d0d0;box-shadow:1px 0 0 #fafafa"></div>
<div class="a" style="left:1444px;top:616px;width:1px;height:17px;background:#d0d0d0;box-shadow:1px 0 0 #fafafa"></div>
<div class="a" style="left:1606px;top:616px;width:1px;height:17px;background:#d0d0d0;box-shadow:1px 0 0 #fafafa"></div>
<div class="t" style="left:406.25px;top:618.78px;font-size:11.9px;transform:scaleX(1.0089);transform-origin:0 0;">Инвентарный номер</div>
<div class="t" style="left:533.75px;top:618.78px;font-size:11.9px;transform:scaleX(1.0106);transform-origin:0 0;">Возможность использования</div>
<div class="t" style="left:714px;top:618.78px;font-size:11.9px;">Модальности в Исследовании</div>
<div class="t" style="left:898px;top:618.78px;font-size:11.9px;transform:scaleX(0.9912);transform-origin:0 0;">Модальность</div>
<div class="t" style="left:983.25px;top:618.78px;font-size:11.9px;">Изображения в серии</div>
<div class="t" style="left:1121.1px;top:618.78px;font-size:11.9px;">Изображения в исследовании</div>
<div class="t" style="left:1307px;top:618.78px;font-size:11.9px;transform:scaleX(0.9910);transform-origin:0 0;">Серии в исследовании</div>
<div class="t" style="left:1448.75px;top:618.78px;font-size:11.9px;">Комментарии на пациента</div>
<div class="a" style="left:1607px;top:612px;width:47px;height:23px;overflow:hidden"><div class="t" style="left:3px;top:7px;font-size:12px">Patienten-ID</div></div>
<div class="a" style="left:401px;top:636px;width:1253px;height:16px;background:#c5e8e9"></div>
<div class="t" style="left:405px;top:638.74px;font-size:12px;">3</div>
<div class="a" style="left:533px;top:641px;width:7px;height:7px;border-radius:50%;background:radial-gradient(circle at 40% 40%,#b9e6b0,#5fae5a);border:1px solid #8fbf8a"></div>
<div class="t" style="left:545px;top:638.78px;font-size:11.9px;transform:scaleX(0.9310);transform-origin:0 0;">ONLINE</div>
<div class="t" style="left:713px;top:638.78px;font-size:11.9px;transform:scaleX(0.8771);transform-origin:0 0;">DX</div>
<div class="t" style="left:898px;top:638.78px;font-size:11.9px;transform:scaleX(0.8771);transform-origin:0 0;">DX</div>
<div class="t" style="left:983px;top:638.74px;font-size:12px;">1</div>
<div class="t" style="left:1121px;top:638.74px;font-size:12px;">2</div>
<div class="t" style="left:1307px;top:638.74px;font-size:12px;">2</div>
<div class="a" style="left:1607px;top:639px;width:46px;height:14px;overflow:hidden"><div class="t" style="left:2.5px;top:0;font-size:11.9px;transform:scaleX(0.8800);transform-origin:0 0">34F690B</div></div>
<div class="t" style="left:405px;top:654.74px;font-size:12px;">3</div>
<div class="a" style="left:533px;top:657px;width:7px;height:7px;border-radius:50%;background:radial-gradient(circle at 40% 40%,#b9e6b0,#5fae5a);border:1px solid #8fbf8a"></div>
<div class="t" style="left:545px;top:654.78px;font-size:11.9px;transform:scaleX(0.9310);transform-origin:0 0;">ONLINE</div>
<div class="t" style="left:713px;top:654.78px;font-size:11.9px;transform:scaleX(0.8771);transform-origin:0 0;">DX</div>
<div class="t" style="left:898px;top:654.78px;font-size:11.9px;transform:scaleX(0.8771);transform-origin:0 0;">DX</div>
<div class="t" style="left:983px;top:654.74px;font-size:12px;">1</div>
<div class="t" style="left:1121px;top:654.74px;font-size:12px;">2</div>
<div class="t" style="left:1307px;top:654.74px;font-size:12px;">2</div>
<div class="a" style="left:1607px;top:655px;width:46px;height:14px;overflow:hidden"><div class="t" style="left:2.5px;top:0;font-size:11.9px;transform:scaleX(0.8800);transform-origin:0 0">34F690B</div></div>
<div class="a" style="left:401px;top:685px;width:1253px;height:16px;background:#d6d6d6"></div>
<div class="a" style="left:401px;top:685px;width:16px;height:16px;background:linear-gradient(90deg,#f4f4f4,#e6e6e6)"></div>
<div class="a" style="left:1638px;top:685px;width:16px;height:16px;background:linear-gradient(90deg,#f4f4f4,#e6e6e6)"></div>
<svg class="a" style="left:406px;top:689px" width="5" height="8" viewBox="0 0 5 8"><path d="M5 0 V8 L0 4 Z" fill="#444"/></svg>
<svg class="a" style="left:1644px;top:689px" width="5" height="8" viewBox="0 0 5 8"><path d="M0 0 V8 L5 4 Z" fill="#444"/></svg>
<div class="a" style="left:416px;top:685px;width:335px;height:15px;background:linear-gradient(#fafafa,#e6e6e6);border:1px solid #9a9a9a;border-radius:2px"></div>
<div class="a" style="left:580px;top:689px;width:7px;height:7px;background:repeating-linear-gradient(90deg,#9a9a9a 0 1px,transparent 1px 3px)"></div>
<div class="a" style="left:1004px;top:751px;width:40px;height:2px;background:repeating-linear-gradient(90deg,#b0b0b0 0 1px,transparent 1px 2px)"></div>
<div class="a" style="left:365px;top:469px;width:2px;height:40px;background:repeating-linear-gradient(#b4b4b4 0 1px,transparent 1px 2px)"></div>
<svg class="a" style="left:387px;top:763px" width="26" height="22" viewBox="0 0 26 22"><rect x="1.5" y="1.5" width="21" height="7" fill="#fff"/><rect x="2" y="2" width="6" height="6" fill="#444"/><rect x="9" y="2" width="6" height="6" fill="#444"/><rect x="16" y="2" width="6" height="6" fill="#444"/><path d="M14 11 L22 19 M22 11 L14 19" stroke="#555" stroke-width="4.4" stroke-linecap="round"/><path d="M14 11 L22 19 M22 11 L14 19" stroke="#fff" stroke-width="2.2" stroke-linecap="round"/></svg>
<div class="a" style="left:461px;top:766px;width:15px;height:13px;background:#fff;border:1px solid #444;border-radius:1px"></div>
<div class="t" style="left:481px;top:767.16px;font-size:10.8px;">1 x 1</div>
<svg class="a" style="left:524px;top:770px" width="10" height="6" viewBox="0 0 10 6"><path d="M0 0 H9.5 L4.75 5.5 Z" fill="#555"/></svg>
<svg class="a" style="left:840px;top:755px" width="160" height="35" viewBox="0 0 160 35"><defs><linearGradient id="ng" x1="0" y1="0" x2="0" y2="1"><stop offset="0" stop-color="#7a7a7a"/><stop offset="1" stop-color="#4a4a4a"/></linearGradient></defs><path d="M9.6 12 V24.5" stroke="#d0d0d0" stroke-width="4.5" stroke-linecap="round"/><path d="M9.6 12 V24.5" stroke="#fff" stroke-width="3" stroke-linecap="round"/><path d="M9.6 12 V24.5" stroke="#707070" stroke-width="1.6"/><path d="M22.8 13.8 L22.8 22.8 L14.3 18.3 Z" fill="none" stroke="#cfcfcf" stroke-width="5" stroke-linejoin="round"/><path d="M22.8 13.8 L22.8 22.8 L14.3 18.3 Z" fill="none" stroke="#fff" stroke-width="3" stroke-linejoin="round"/><path d="M22.8 13.8 L22.8 22.8 L14.3 18.3 Z" fill="url(#ng)" stroke="url(#ng)" stroke-width="1" stroke-linejoin="round"/><path d="M62.8 13.8 L62.8 22.8 L54.3 18.3 Z" fill="none" stroke="#cfcfcf" stroke-width="5" stroke-linejoin="round"/><path d="M62.8 13.8 L62.8 22.8 L54.3 18.3 Z" fill="none" stroke="#fff" stroke-width="3" stroke-linejoin="round"/><path d="M62.8 13.8 L62.8 22.8 L54.3 18.3 Z" fill="url(#ng)" stroke="url(#ng)" stroke-width="1" stroke-linejoin="round"/><path d="M91.5 13.8 L91.5 22.8 L100 18.3 Z" fill="none" stroke="#cfcfcf" stroke-width="5" stroke-linejoin="round"/><path d="M91.5 13.8 L91.5 22.8 L100 18.3 Z" fill="none" stroke="#fff" stroke-width="3" stroke-linejoin="round"/><path d="M91.5 13.8 L91.5 22.8 L100 18.3 Z" fill="url(#ng)" stroke="url(#ng)" stroke-width="1" stroke-linejoin="round"/><path d="M131.5 13.8 L131.5 22.8 L140 18.3 Z" fill="none" stroke="#cfcfcf" stroke-width="5" stroke-linejoin="round"/><path d="M131.5 13.8 L131.5 22.8 L140 18.3 Z" fill="none" stroke="#fff" stroke-width="3" stroke-linejoin="round"/><path d="M131.5 13.8 L131.5 22.8 L140 18.3 Z" fill="url(#ng)" stroke="url(#ng)" stroke-width="1" stroke-linejoin="round"/><path d="M144.8 12 V24.5" stroke="#d0d0d0" stroke-width="4.5" stroke-linecap="round"/><path d="M144.8 12 V24.5" stroke="#fff" stroke-width="3" stroke-linecap="round"/><path d="M144.8 12 V24.5" stroke="#707070" stroke-width="1.6"/></svg>
<svg class="a" style="left:1597px;top:763px" width="26" height="20" viewBox="0 0 26 20"><rect x="5" y="2" width="13" height="16" fill="#dcdcdc" stroke="#e8e8e8" stroke-width="2"/><rect x="6" y="3" width="11" height="6" fill="#555"/><rect x="6" y="11" width="11" height="6" fill="#555"/><path d="M1 10 H14" stroke="#ccc" stroke-width="1.5"/><path d="M17 6 L23 13 M23 6 L17 13" stroke="#cfcfcf" stroke-width="3.2"/><path d="M17 6 L23 13 M23 6 L17 13" stroke="#fff" stroke-width="1.4"/></svg>
<svg class="a" style="left:1636px;top:761px" width="28" height="24" viewBox="0 0 28 24"><g fill="none" stroke="#d4d4d4" stroke-width="2"><path d="M2 2 H7 M2 2 V7 M2 2 L7 7"/><path d="M26 2 H21 M26 2 V7 M26 2 L21 7"/><path d="M2 22 H7 M2 22 V17 M2 22 L7 17"/><path d="M26 22 H21 M26 22 V17 M26 22 L21 17"/><rect x="6" y="6" width="16" height="12"/></g><rect x="8" y="9" width="12" height="7" fill="#555"/></svg>
<div class="a" style="left:383px;top:796px;width:1050px;height:100px;background:#686868;border:1px solid #a0a0a0;border-bottom-color:#f8f8f8;border-right-color:#f8f8f8"></div>
<div class="a" style="left:384px;top:797px;width:10px;height:83px;background:#555"></div>
<div class="a" style="left:394px;top:797px;width:82px;height:83px;background:#e6e6e6"></div>
<div class="a" style="left:476px;top:797px;width:9px;height:83px;background:#555"></div>
<div class="a" style="left:400px;top:802px;width:71px;height:70px;border:3px dashed #e8922e;border-radius:3px"></div>
<div class="a" style="left:403px;top:805px;width:65px;height:64px;background:#282828"></div>
<div class="a" style="left:403px;top:805px;width:65px;height:5px;background:#000"></div>
<div class="a" style="left:403px;top:810px;width:65px;height:31px;background:#333"></div>
<div class="a" style="left:403px;top:841px;width:65px;height:5px;background:#000"></div>
<div class="a" style="left:403px;top:846px;width:65px;height:1px;background:#555"></div>
<div class="a" style="left:449px;top:850px;width:15px;height:15px;background:#e8922e;border:1px solid #f5c58a"></div>
<div class="t" style="left:452px;top:851px;font-size:11px;font-weight:bold;color:#fff;font-family:'Liberation Serif',serif">1</div>
<div class="a" style="left:412px;top:877px;width:41px;height:2px;background:repeating-linear-gradient(90deg,#e8922e 0 4px,transparent 4px 7px)"></div>
<div class="a" style="left:384px;top:880px;width:1048px;height:15px;background:#d6d6d6"></div>
<div class="a" style="left:384px;top:880px;width:16px;height:15px;background:linear-gradient(90deg,#f4f4f4,#e6e6e6)"></div>
<div class="a" style="left:1416px;top:880px;width:16px;height:15px;background:linear-gradient(90deg,#f4f4f4,#e6e6e6)"></div>
<svg class="a" style="left:389px;top:884px" width="5" height="8" viewBox="0 0 5 8"><path d="M5 0 V8 L0 4 Z" fill="#444"/></svg>
<svg class="a" style="left:1422px;top:884px" width="5" height="8" viewBox="0 0 5 8"><path d="M0 0 V8 L5 4 Z" fill="#444"/></svg>
<div class="a" style="left:398px;top:880px;width:1018px;height:14px;background:linear-gradient(#fafafa,#e6e6e6);border:1px solid #9a9a9a;border-radius:2px"></div>
<div class="a" style="left:904px;top:884px;width:7px;height:6px;background:repeating-linear-gradient(90deg,#9a9a9a 0 1px,transparent 1px 3px)"></div>
<div class="a" style="left:383px;top:894px;width:1050px;height:2px;background:#5e5e5e"></div>
<svg class="a" style="left:1021px;top:898px" width="10" height="3" viewBox="0 0 10 3"><path d="M0.5 0.8 Q0.5 0 1.5 0 H8.5 Q9.5 0 9.5 0.8 L8 3 H2 Z" fill="#444"/></svg>
<div class="a" style="left:1517px;top:823px;width:68px;height:37px;background:#fff;border:3px solid #2a2a2a;border-radius:3px"></div>
<div class="t" style="left:1548px;top:835px;font-size:11px;font-weight:bold;color:#1a1a2a">1</div>
<div class="cmb" style="left:1441px;top:874px;width:224px;height:23px;background:linear-gradient(#fcfcfc,#ececec)"></div>
<div class="a" style="left:1643px;top:877px;width:1px;height:18px;background:#cfcfcf"></div>
<svg class="a" style="left:1650px;top:879px" width="8" height="5" viewBox="0 0 8 5"><path d="M0 4.5 H7.5 L3.75 0 Z" fill="#111"/></svg>
<div class="t" style="left:1445px;top:879.16px;font-size:10.8px;">Сбросить при визуализации</div>
<div class="t" style="left:1593px;top:884px;font-size:13px;font-weight:bold;color:#fff;letter-spacing:0.65px;text-shadow:-1px -1px 0 #000,1px -1px 0 #000,-1px 1px 0 #000,1px 1px 0 #000,0 1px 0 #000,0 -1px 0 #000,1px 0 0 #000,-1px 0 0 #000">medteh.info</div>
</body></html>
